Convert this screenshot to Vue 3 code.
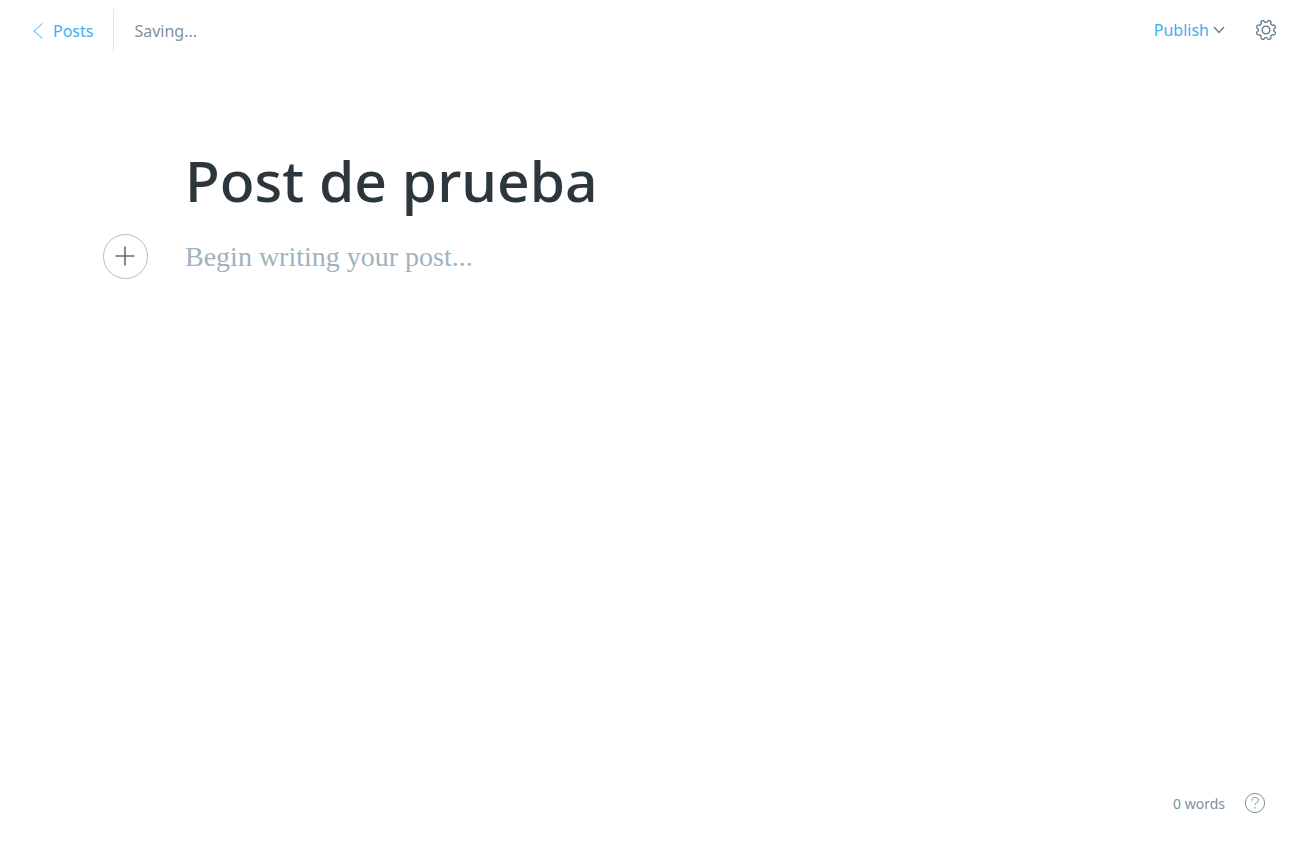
<script setup>
import { ref } from 'vue'

const title = ref('Post de prueba')
const body = ref('')

// Outline of an eight-toothed cog centred on 0,0
const points = Array.from({ length: 128 }, (_, i) => {
  const angle = (i / 128) * Math.PI * 2
  const radius = 8.8 + 1.15 * Math.tanh(-2.2 * Math.cos(8 * angle))
  return `${(radius * Math.cos(angle)).toFixed(2)} ${(radius * Math.sin(angle)).toFixed(2)}`
})
const cogPath = `M${points.join('L')}Z`
</script>

<template>
  <div class="editor">
    <header class="bar">
      <nav class="left">
        <a href="#posts" class="back">
          <svg width="10" height="16" viewBox="0 0 10 16" aria-hidden="true">
            <path d="M9.500 .5 1 8l8.500 7.500" />
          </svg>
          <span>Posts</span>
        </a>
        <span class="status">Saving...</span>
      </nav>
      <div class="right">
        <button type="button" class="publish">
          <span>Publish</span>
          <svg width="12" height="8" viewBox="0 0 12 8" aria-hidden="true">
            <path d="M1 1l5 5.500L11 1" />
          </svg>
        </button>
        <button type="button" class="icon" aria-label="Settings">
          <svg width="22" height="22" viewBox="-11 -11 22 22" aria-hidden="true">
            <path :d="cogPath" />
            <circle r="3.900" />
          </svg>
        </button>
      </div>
    </header>

    <main class="canvas">
      <input v-model="title" class="title" type="text" aria-label="Post title" />
      <button type="button" class="add" aria-label="Add a card">
        <svg width="21" height="21" viewBox="0 0 21 21" aria-hidden="true">
          <path d="M10 .5v19M.5 10h19" />
        </svg>
      </button>
      <textarea v-model="body" class="body" rows="1" aria-label="Post content" placeholder="Begin writing your post..."></textarea>
    </main>

    <footer class="foot">
      <span>0 words</span>
      <a href="#help" class="icon" aria-label="Help">
        <svg width="22" height="22" viewBox="0 0 22 22" aria-hidden="true">
          <circle cx="11" cy="11" r="9.600" />
          <path d="M8 8.800c0-4.600 6.400-4.400 6.400-.6 0 2.500-3.400 2.200-3.400 4.800M11 14.800v1.700" />
        </svg>
      </a>
    </footer>
  </div>
</template>

<style>
body {
  margin: 0;
  background: #fff;
}
</style>

<style scoped>
.editor {
  box-sizing: border-box;
  display: flex;
  flex-direction: column;
  min-height: 100vh;
  font-family: "Segoe UI", "Noto Sans", "Open Sans", sans-serif;
  font-size: 16px;
  color: #7d929d;
}
svg {
  display: block;
  fill: none;
  stroke: currentColor;
}
button,
input,
textarea {
  padding: 0;
  border: 0;
  background: none;
  font: inherit;
  color: inherit;
  outline: none;
}
button {
  cursor: pointer;
}
a {
  color: inherit;
  text-decoration: none;
}
.bar,
.left,
.right,
.back,
.publish,
.foot {
  display: flex;
  align-items: center;
}
.bar {
  justify-content: space-between;
  align-items: flex-start;
  padding: 9px 18px 0 33px;
}
.back {
  gap: 10px;
  height: 43px;
  padding-right: 20px;
  border-right: 1px solid #dfe9ef;
  color: #3eb0ef;
}
.status {
  padding-left: 20px;
}
.right {
  gap: 30px;
  height: 42px;
}
.publish {
  gap: 4px;
  color: #3eb0ef;
}
.publish svg,
.icon {
  color: #5f7a87;
}
.right svg {
  stroke-width: 1.3;
}
.canvas {
  flex: 1;
  display: grid;
  grid-template-columns: 45px minmax(0, 1fr);
  grid-auto-rows: max-content;
  column-gap: 37px;
  row-gap: 14px;
  padding: 88px 103px 0;
}
.title {
  grid-column: 2;
  width: 100%;
  height: 80px;
  font-size: 57px;
  font-weight: 500;
  line-height: 80px;
  color: #2b373c;
}
.add {
  display: grid;
  place-items: center;
  width: 45px;
  height: 45px;
  border: 1px solid #adc0ca;
  border-radius: 50%;
  color: #5f7078;
}
.add svg {
  stroke-width: 1.6;
}
.body {
  width: 100%;
  height: 45px;
  resize: none;
  overflow: hidden;
  font-family: Georgia, "Liberation Serif", serif;
  font-size: 28px;
  line-height: 45px;
}
.body::placeholder {
  color: #9fb3be;
  opacity: 1;
}
.foot {
  justify-content: flex-end;
  gap: 19px;
  padding: 0 29px 29px 0;
  font-size: 14px;
}
.foot .icon {
  color: #7d929d;
}
</style>
